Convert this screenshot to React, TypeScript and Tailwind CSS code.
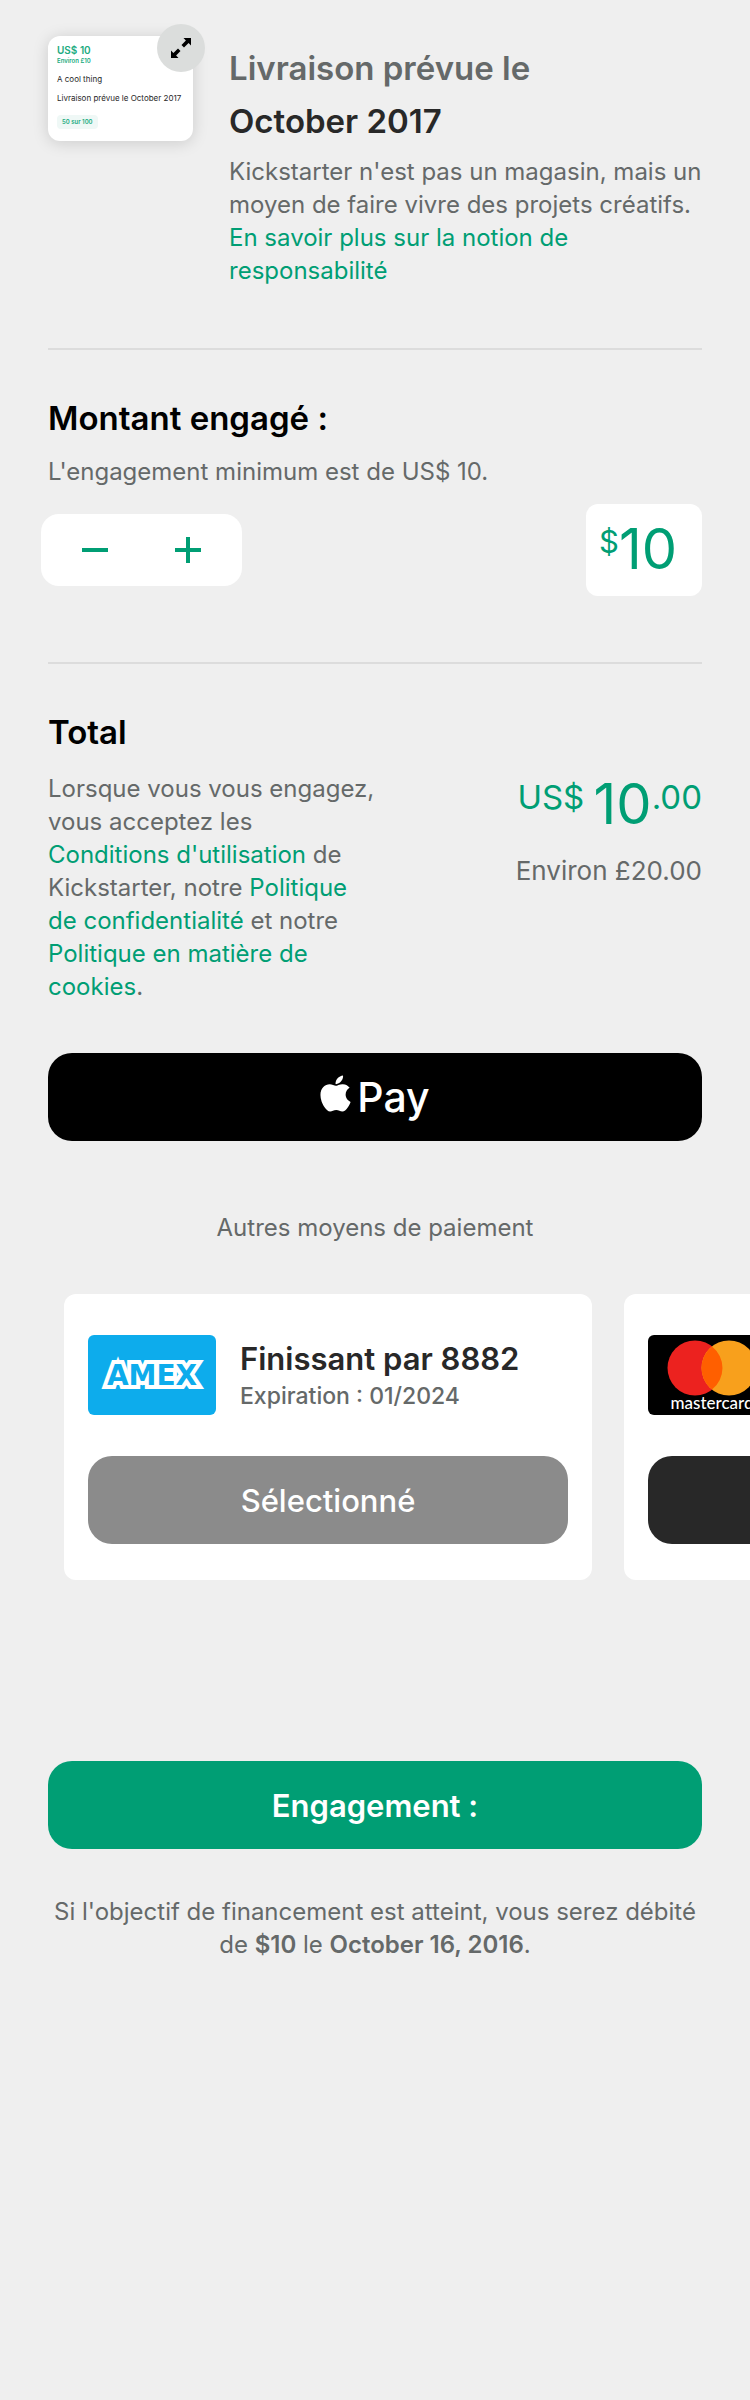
import { useState } from "react";
import type { ReactNode } from "react";
import { FaApple } from "react-icons/fa";

function TextLink({ children }: { children: ReactNode }) {
  return (
    <a href="#" className="text-[#009e74]">
      {children}
    </a>
  );
}

function ExpandIcon() {
  return (
    <svg viewBox="0 0 20 20" className="h-5 w-5" aria-hidden="true">
      <path d="M12.500 0H20V7.500L17.600 5.100L13 9.500L10.500 7L14.900 2.400Z" />
      <path d="M7.500 20H0V12.500L2.400 14.900L7 10.500L9.500 13L5.100 17.600Z" />
    </svg>
  );
}

function RewardThumbnail() {
  return (
    <div className="relative h-[105px] w-[145px] shrink-0 rounded-xl bg-white px-[9px] pt-[7px] text-[#282828] shadow-[0_2px_16px_rgba(0,0,0,0.15)]">
      <p className="text-[10px] leading-[14px] font-semibold text-[#1bab80]">US$ 10</p>
      <p className="text-[6px] leading-[8px] font-semibold text-[#1bab80]">Environ £10</p>
      <p className="mt-[9px] text-[8px] leading-[11px]">A cool thing</p>
      <p className="mt-2 text-[8px] leading-[11px] whitespace-nowrap">Livraison prévue le October 2017</p>
      <p className="mt-[11px] w-fit rounded-sm bg-[#eff8f6] px-[5px] text-[6px] leading-[14px] font-semibold text-[#1bab80]">
        50 sur 100
      </p>
      <button
        type="button"
        aria-label="Agrandir"
        className="absolute -top-3 -right-3 flex h-12 w-12 items-center justify-center rounded-full bg-[#dbdddc] text-black"
      >
        <ExpandIcon />
      </button>
    </div>
  );
}

function AmexLogo() {
  return (
    <svg viewBox="0 0 128 80" className="h-20 w-32 shrink-0 rounded-md bg-[#0dacec]" role="img" aria-label="American Express">
      <text
        x="64"
        y="50"
        textAnchor="middle"
        fontFamily="'DejaVu Sans', sans-serif"
        fontSize="28"
        fontWeight="700"
        fill="#0dacec"
        stroke="#ffffff"
        strokeWidth="8"
        paintOrder="stroke"
      >
        AMEX
      </text>
    </svg>
  );
}

function MastercardLogo() {
  return (
    <svg viewBox="0 0 128 80" className="h-20 w-32 shrink-0 rounded-md bg-black" role="img" aria-label="Mastercard">
      <circle cx="47" cy="33" r="27.500" fill="#ec221f" />
      <circle cx="81" cy="33" r="27.500" fill="#f8a01c" />
      <path d="M64 11.400a27.500 27.500 0 0 1 0 43.200a27.500 27.500 0 0 1 0-43.200Z" fill="#ff5f00" />
      <text x="64" y="74" textAnchor="middle" fontFamily="Lato, sans-serif" fontSize="17" fontWeight="500" fill="#ffffff">
        mastercard
      </text>
    </svg>
  );
}

interface PaymentCardProps {
  logo: ReactNode;
  ending: string;
  expiration: string;
  selected: boolean;
  onSelect: () => void;
}

function PaymentCard({ logo, ending, expiration, selected, onSelect }: PaymentCardProps) {
  return (
    <article className="w-[528px] shrink-0 rounded-xl bg-white px-6 pt-[41px] pb-9">
      <div className="flex items-center gap-6">
        {logo}
        <div className="whitespace-nowrap">
          <h3 className="text-[31px] leading-[42px] font-semibold">Finissant par {ending}</h3>
          <p className="text-[23px] leading-8 font-medium text-[#656969]">Expiration : {expiration}</p>
        </div>
      </div>
      <button
        type="button"
        onClick={onSelect}
        className={`mt-[41px] h-[88px] w-full rounded-3xl text-[31px] font-medium text-white ${selected ? "bg-[#8b8b8b]" : "bg-[#282828]"}`}
      >
        {selected ? "Sélectionné" : "Sélectionner"}
      </button>
    </article>
  );
}

export default function App() {
  const [amount, setAmount] = useState(10);
  const [card, setCard] = useState("amex");

  return (
    <main className="min-h-screen bg-[#efefef] pt-9 pb-12 font-['Inter',sans-serif] text-2xl leading-[33px] text-[#656969]">
      <div className="px-12">
        <section className="flex items-start gap-9 pb-[61px]">
          <RewardThumbnail />
          <div className="min-w-0 flex-1">
            <h2 className="mt-1.5 text-[33px] leading-[53px] font-semibold">
              Livraison prévue le
              <span className="block text-[#282828]">October 2017</span>
            </h2>
            <p className="mt-[7px]">
              Kickstarter n'est pas un magasin, mais un moyen de faire vivre des projets créatifs.{" "}
              <TextLink>En savoir plus sur la notion de responsabilité</TextLink>
            </p>
          </div>
        </section>

        <section className="border-t-2 border-[#dcdcdc] pt-12 pb-[66px]">
          <h2 className="text-[33px] leading-10 font-semibold text-black">Montant engagé :</h2>
          <p className="mt-[17px]">L'engagement minimum est de US$ 10.</p>
          <div className="mt-4 flex items-center justify-between">
            <div className="-ml-[7px] flex h-[72px] w-[201px] rounded-[18px] bg-white px-2 text-[#009e74]">
              <button
                type="button"
                aria-label="Diminuer"
                onClick={() => setAmount(Math.max(10, amount - 1))}
                className="flex flex-1 items-center justify-center"
              >
                <svg viewBox="0 0 26 26" className="h-[26px] w-[26px]" stroke="currentColor" strokeWidth="4">
                  <path d="M0 13H26" />
                </svg>
              </button>
              <button
                type="button"
                aria-label="Augmenter"
                onClick={() => setAmount(amount + 1)}
                className="flex flex-1 items-center justify-center"
              >
                <svg viewBox="0 0 26 26" className="h-[26px] w-[26px]" stroke="currentColor" strokeWidth="4">
                  <path d="M0 13H26M13 0V26" />
                </svg>
              </button>
            </div>
            <label className="flex h-[92px] w-[116px] items-start rounded-xl bg-white pt-[11px] pl-[13px] text-[#009e74]">
              <span className="pt-[7px] text-[31px] leading-10">$</span>
              <input
                type="text"
                inputMode="numeric"
                aria-label="Montant engagé"
                value={amount}
                onChange={(e) => setAmount(Number(e.target.value) || 0)}
                className="h-[68px] w-full min-w-0 bg-transparent text-[56px] leading-[68px] outline-none"
              />
            </label>
          </div>
        </section>

        <section className="border-t-2 border-[#dcdcdc] pt-12">
          <h2 className="text-[33px] leading-10 font-semibold text-black">Total</h2>
          <div className="mt-5 flex items-start justify-between">
            <p className="w-1/2">
              Lorsque vous vous engagez, vous acceptez les <TextLink>Conditions d'utilisation</TextLink> de Kickstarter,
              notre <TextLink>Politique de confidentialité</TextLink> et notre{" "}
              <TextLink>Politique en matière de cookies</TextLink>.
            </p>
            <div className="pt-[5px] text-right whitespace-nowrap">
              <p className="flex items-start justify-end text-[#009e74]">
                <span className="text-[33px] leading-10">US$&nbsp;</span>
                <span className="text-[56px] leading-[54px]">10</span>
                <span className="text-[33px] leading-10">.00</span>
              </p>
              <p className="mt-[22px] text-[26px] leading-9">Environ £20.00</p>
            </div>
          </div>
        </section>

        <button
          type="button"
          aria-label="Apple Pay"
          className="mt-[50px] flex h-[88px] w-full items-center justify-center gap-1.5 rounded-3xl bg-black text-white"
        >
          <FaApple className="mb-2 h-[41px] w-[31px]" />
          <span className="text-[41px] leading-[52px] font-medium">Pay</span>
        </button>
        <p className="mt-[70px] text-center">Autres moyens de paiement</p>
      </div>

      <section className="mt-[50px] flex gap-8 overflow-x-auto px-16 text-[#282828] [scrollbar-width:none]">
        <PaymentCard
          logo={<AmexLogo />}
          ending="8882"
          expiration="01/2024"
          selected={card === "amex"}
          onSelect={() => setCard("amex")}
        />
        <PaymentCard
          logo={<MastercardLogo />}
          ending="5556"
          expiration="01/2024"
          selected={card === "mastercard"}
          onSelect={() => setCard("mastercard")}
        />
      </section>

      <div className="mt-[181px] px-12">
        <button type="button" className="h-[88px] w-full rounded-3xl bg-[#009e74] text-[31px] font-semibold text-white">
          Engagement :
        </button>
        <p className="mt-[46px] text-center">
          Si l'objectif de financement est atteint, vous serez débité de <b className="font-semibold">$10</b> le{" "}
          <b className="font-semibold">October 16, 2016</b>.
        </p>
      </div>
    </main>
  );
}
